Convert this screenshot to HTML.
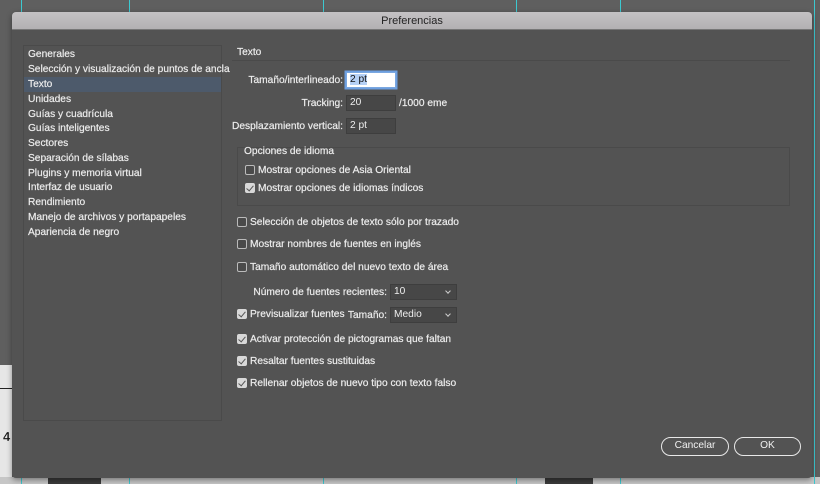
<!DOCTYPE html>
<html><head><meta charset="utf-8"><style>
*{margin:0;padding:0;box-sizing:border-box}
body{width:820px;height:484px;overflow:hidden;background:#5f5f5f;position:relative;font-family:"Liberation Sans",sans-serif;font-size:10.2px;color:#ececec}
.a{position:absolute}
.cy{position:absolute;top:0;width:1px;height:484px;background:#3cc8d0}
.t{position:absolute;white-space:nowrap;line-height:13px;-webkit-text-stroke:0.2px #ececec}
.r{position:absolute;white-space:nowrap;line-height:13px;text-align:right;width:200px;-webkit-text-stroke:0.2px #ececec}
.cb{position:absolute;width:10px;height:10px;border:1px solid #bbb;border-radius:2px;background:#4a4a4a}
.cb.on{background:#d8d8d8;border-color:#d8d8d8}
.cb.on::after{content:"";position:absolute;left:2px;top:0px;width:3px;height:6px;border:solid #555;border-width:0 1.5px 1.5px 0;transform:rotate(40deg)}
.in{position:absolute;height:16px;background:#474747;border:1px solid #3e3e3e;padding-left:3px;line-height:14px;color:#eee}
.sel{position:absolute;height:16px;background:#474747;border:1px solid #3e3e3e;padding-left:3px;line-height:14px;color:#eee}
.sel::after{content:"";position:absolute;right:6px;top:4px;width:3px;height:3px;border:solid #ccc;border-width:0 1px 1px 0;transform:rotate(45deg)}
.btn{position:absolute;height:19px;border:1.5px solid #e8e8e8;border-radius:10px;text-align:center;line-height:16px;color:#f0f0f0}
</style></head><body>
<div class="a" style="left:0;top:365px;width:12px;height:119px;background:#e6e6e6"></div>
<div class="a" style="left:0;top:388px;width:12px;height:1px;background:#222"></div>
<div class="t" style="left:3px;top:430px;color:#111;font-weight:bold;font-size:13px">4</div>
<div class="a" style="left:0;top:477px;width:820px;height:7px;background:#c6c6c6"></div>
<div class="a" style="left:48px;top:477px;width:53px;height:7px;background:#3a3a3a"></div>
<div class="a" style="left:545px;top:477px;width:48px;height:7px;background:#3a3a3a"></div>
<div class="cy" style="left:21px"></div><div class="cy" style="left:129px"></div><div class="cy" style="left:323px"></div><div class="cy" style="left:516px"></div><div class="cy" style="left:620px"></div><div class="cy" style="left:814px"></div>
<div class="a" style="left:12px;top:12px;width:800px;height:466px;background:#535353;border-radius:4px;box-shadow:0 2px 6px rgba(0,0,0,.4)"></div>
<div class="a" style="left:12px;top:12px;width:800px;height:18px;background:linear-gradient(#c4c2c4,#b3b1b3);border-radius:4px 4px 0 0;border-bottom:1px solid #777;text-align:center;color:#222;line-height:18px;font-size:11px">Preferencias</div>
<div class="a" style="left:23px;top:45px;width:199px;height:376px;border:1px solid #4a4a4a"></div>
<div class="a" style="left:24px;top:77px;width:197px;height:15px;background:#4d5a6b"></div>
<div class="t" style="left:28px;top:48px">Generales</div>
<div class="t" style="left:28px;top:63px">Selección y visualización de puntos de ancla</div>
<div class="t" style="left:28px;top:78px">Texto</div>
<div class="t" style="left:28px;top:93px">Unidades</div>
<div class="t" style="left:28px;top:108px">Guías y cuadrícula</div>
<div class="t" style="left:28px;top:122px">Guías inteligentes</div>
<div class="t" style="left:28px;top:137px">Sectores</div>
<div class="t" style="left:28px;top:152px">Separación de sílabas</div>
<div class="t" style="left:28px;top:167px">Plugins y memoria virtual</div>
<div class="t" style="left:28px;top:181px">Interfaz de usuario</div>
<div class="t" style="left:28px;top:196px">Rendimiento</div>
<div class="t" style="left:28px;top:211px">Manejo de archivos y portapapeles</div>
<div class="t" style="left:28px;top:226px">Apariencia de negro</div>
<div class="t" style="left:237px;top:46px">Texto</div>
<div class="a" style="left:232px;top:60px;width:558px;height:1px;background:#4a4a4a"></div>
<div class="r" style="left:143px;top:74px">Tamaño/interlineado:</div>
<div class="in" style="left:346px;top:72px;width:50px;background:#fff;border:1px solid #7aa7e0;box-shadow:0 0 0 1.5px #6d9fe0;color:#111"><span style="background:#b5d0f5">2 pt</span></div>
<div class="r" style="left:143px;top:97px">Tracking:</div>
<div class="in" style="left:346px;top:95px;width:50px">20</div>
<div class="t" style="left:399px;top:97px">/1000 eme</div>
<div class="r" style="left:143px;top:120px">Desplazamiento vertical:</div>
<div class="in" style="left:346px;top:118px;width:50px">2 pt</div>
<div class="a" style="left:237px;top:147px;width:553px;height:59px;border:1px solid #4a4a4a"></div>
<div class="t" style="left:244px;top:145px">Opciones de idioma</div>
<div class="cb" style="left:245px;top:165px"></div><div class="t" style="left:258px;top:164px">Mostrar opciones de Asia Oriental</div>
<div class="cb on" style="left:245px;top:183px"></div><div class="t" style="left:258px;top:182px">Mostrar opciones de idiomas índicos</div>
<div class="cb" style="left:237px;top:217px"></div><div class="t" style="left:250px;top:216px">Selección de objetos de texto sólo por trazado</div>
<div class="cb" style="left:237px;top:239px"></div><div class="t" style="left:250px;top:238px">Mostrar nombres de fuentes en inglés</div>
<div class="cb" style="left:237px;top:262px"></div><div class="t" style="left:250px;top:261px">Tamaño automático del nuevo texto de área</div>
<div class="r" style="left:187px;top:286px">Número de fuentes recientes:</div>
<div class="sel" style="left:390px;top:284px;width:67px">10</div>
<div class="cb on" style="left:237px;top:309px"></div><div class="t" style="left:250px;top:308px">Previsualizar fuentes</div>
<div class="r" style="left:187px;top:309px">Tamaño:</div>
<div class="sel" style="left:390px;top:307px;width:67px">Medio</div>
<div class="cb on" style="left:237px;top:334px"></div><div class="t" style="left:250px;top:333px">Activar protección de pictogramas que faltan</div>
<div class="cb on" style="left:237px;top:356px"></div><div class="t" style="left:250px;top:355px">Resaltar fuentes sustituidas</div>
<div class="cb on" style="left:237px;top:378px"></div><div class="t" style="left:250px;top:377px">Rellenar objetos de nuevo tipo con texto falso</div>
<div class="btn" style="left:661px;top:437px;width:68px">Cancelar</div>
<div class="btn" style="left:734px;top:437px;width:67px">OK</div>
</body></html>
